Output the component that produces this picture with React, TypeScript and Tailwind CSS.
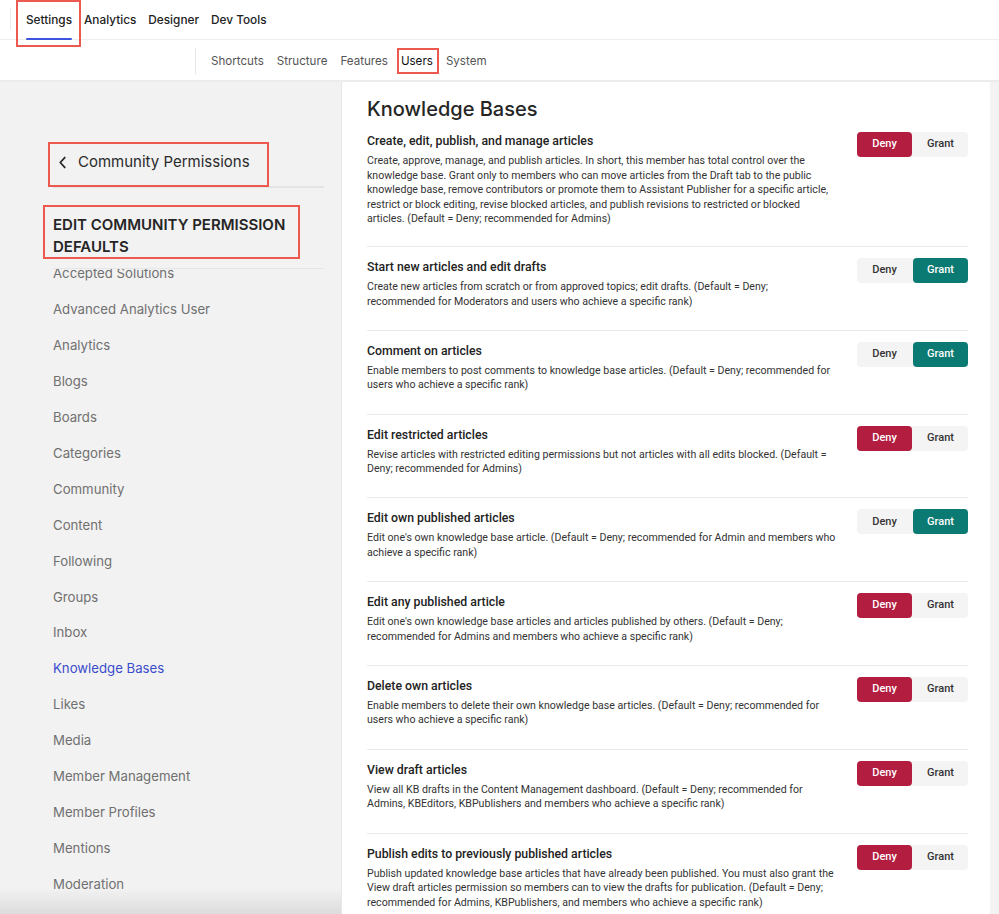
import type { FC, ReactNode } from 'react';

type Perm = { title: string; desc: string; value: 'deny' | 'grant' };

const perms: Perm[] = [
  {
    title: 'Create, edit, publish, and manage articles',
    desc: 'Create, approve, manage, and publish articles. In short, this member has total control over the knowledge base. Grant only to members who can move articles from the Draft tab to the public knowledge base, remove contributors or promote them to Assistant Publisher for a specific article, restrict or block editing, revise blocked articles, and publish revisions to restricted or blocked articles. (Default = Deny; recommended for Admins)',
    value: 'deny',
  },
  {
    title: 'Start new articles and edit drafts',
    desc: 'Create new articles from scratch or from approved topics; edit drafts. (Default = Deny; recommended for Moderators and users who achieve a specific rank)',
    value: 'grant',
  },
  {
    title: 'Comment on articles',
    desc: 'Enable members to post comments to knowledge base articles. (Default = Deny; recommended for users who achieve a specific rank)',
    value: 'grant',
  },
  {
    title: 'Edit restricted articles',
    desc: 'Revise articles with restricted editing permissions but not articles with all edits blocked. (Default = Deny; recommended for Admins)',
    value: 'deny',
  },
  {
    title: 'Edit own published articles',
    desc: "Edit one's own knowledge base article. (Default = Deny; recommended for Admin and members who achieve a specific rank)",
    value: 'grant',
  },
  {
    title: 'Edit any published article',
    desc: "Edit one's own knowledge base articles and articles published by others. (Default = Deny; recommended for Admins and members who achieve a specific rank)",
    value: 'deny',
  },
  {
    title: 'Delete own articles',
    desc: 'Enable members to delete their own knowledge base articles. (Default = Deny; recommended for users who achieve a specific rank)',
    value: 'deny',
  },
  {
    title: 'View draft articles',
    desc: 'View all KB drafts in the Content Management dashboard. (Default = Deny; recommended for Admins, KBEditors, KBPublishers and members who achieve a specific rank)',
    value: 'deny',
  },
  {
    title: 'Publish edits to previously published articles',
    desc: 'Publish updated knowledge base articles that have already been published. You must also grant the View draft articles permission so members can to view the drafts for publication. (Default = Deny; recommended for Admins, KBPublishers, and members who achieve a specific rank)',
    value: 'deny',
  },
];

const sideItems = [
  'Accepted Solutions',
  'Advanced Analytics User',
  'Analytics',
  'Blogs',
  'Boards',
  'Categories',
  'Community',
  'Content',
  'Following',
  'Groups',
  'Inbox',
  'Knowledge Bases',
  'Likes',
  'Media',
  'Member Management',
  'Member Profiles',
  'Mentions',
  'Moderation',
];

const Marked: FC<{ children: ReactNode; box: string }> = ({ children, box }) => (
  <span className="relative inline-block">
    {children}
    <span className={`pointer-events-none absolute border-2 border-[#ec5a4f] ${box}`} />
  </span>
);

const Toggle: FC<{ value: 'deny' | 'grant' }> = ({ value }) => (
  <div className="flex h-[25px] w-[111px] shrink-0 rounded-[4px] bg-[#f4f4f4] text-[11px] font-medium">
    <div
      className={`flex w-[55px] items-center justify-center rounded-[4px] ${
        value === 'deny' ? 'bg-[#b21d40] text-white' : 'text-[#333]'
      }`}
    >
      Deny
    </div>
    <div
      className={`ml-px flex w-[55px] items-center justify-center rounded-[4px] ${
        value === 'grant' ? 'bg-[#0a7a72] text-white' : 'text-[#333]'
      }`}
    >
      Grant
    </div>
  </div>
);

export default function App() {
  return (
    <div className="flex h-[914px] w-[999px] flex-col overflow-hidden bg-white font-['Inter',sans-serif] text-[#222]">
      <nav className="relative flex h-[40px] shrink-0 items-center gap-[12px] border-b border-[#eeeeee] pl-[26px] text-[11.8px] font-medium leading-[16px]">
        <span className="absolute left-[10px] top-[8px] h-[22px] w-px bg-[#eaeaea]" />
        <Marked box="-left-[10px] -right-[9px] -top-[12px] -bottom-[19px]">
          <span className="relative block">
            Settings
            <span className="absolute -bottom-[12px] left-0 right-0 h-[2px] rounded bg-[#3d55e0]" />
          </span>
        </Marked>
        <span>Analytics</span>
        <span>Designer</span>
        <span>Dev Tools</span>
      </nav>

      <div className="flex h-[42px] shrink-0 items-center border-b-2 border-[#ececec] pl-[195px] pt-[2px] text-[11.6px] leading-[16px] text-[#555]">
        <div className="flex h-[26px] items-center gap-[13px] border-l border-[#e6e6e6] pl-[15px]">
          <span>Shortcuts</span>
          <span>Structure</span>
          <span>Features</span>
          <Marked box="-left-[4px] -right-[6px] -top-[5px] -bottom-[5px]">
            <span className="text-[#111]">Users</span>
          </Marked>
          <span>System</span>
        </div>
      </div>

      <div className="flex min-h-0 flex-1">
        <aside className="relative w-[342px] shrink-0 overflow-hidden border-r border-[#e8e8e8] bg-[#f2f2f2] pl-[53px] pr-[17px]">
          <div className="mt-[68px] flex h-[25px] items-center">
            <Marked box="-left-[5px] -right-[19px] -top-[9px] -bottom-[13px]">
              <span className="flex items-center gap-[11px] pl-[5px] text-[15px] text-[#2a2a2a]">
                <svg width="9" height="13" viewBox="0 0 10 14" fill="none" className="-mt-px">
                  <path d="M7.5 1.5 2.5 7l5 5.5" stroke="#2a2a2a" strokeWidth="2" strokeLinecap="round" strokeLinejoin="round" />
                </svg>
                Community Permissions
              </span>
            </Marked>
          </div>
          <div className="mt-[11px] h-[2px] bg-[#e4e4e4]" />
          <div className="mt-[26px]">
            <Marked box="-left-[10px] -right-[15px] -top-[9px] -bottom-[1px]">
              <h2 className="text-[15px] font-semibold uppercase leading-[22px] text-[#252525]">
                Edit Community Permission
                <br />
                Defaults
              </h2>
            </Marked>
          </div>
          <div className="mt-[10px] h-px bg-[#e6e6e6]" />
          <ul className="h-[700px] overflow-hidden text-[13.2px] text-[#707070]">
            <div className="-mt-[13px]">
              {sideItems.map((item) => (
                <li
                  key={item}
                  className={`flex h-[35.95px] items-center ${item === 'Knowledge Bases' ? 'text-[#3a4ccc]' : ''}`}
                >
                  {item}
                </li>
              ))}
            </div>
          </ul>
          <div className="pointer-events-none absolute bottom-0 left-0 right-0 h-[26px] bg-gradient-to-b from-transparent to-[#dcdcdc]" />
        </aside>

        <main className="flex min-w-0 flex-1">
          <div className="flex-1 overflow-hidden pl-[25px] pr-[22px] pt-[13px]">
            <h1 className="text-[20px] font-medium leading-[28px] text-[#252525]">Knowledge Bases</h1>
            <div className="mt-[9px] font-['Roboto',sans-serif]">
              {perms.map((p, i) => (
                <div
                  key={p.title}
                  className={`flex items-start gap-[20.5px] ${
                    i > 0 ? 'border-t border-[#ebebeb] pb-[20.8px] pt-[11px]' : 'pb-[19.5px]'
                  }`}
                >
                  <div className="min-w-0 flex-1">
                    <div className="text-[12.3px] font-medium leading-[18px] text-[#222]">{p.title}</div>
                    <p className="mt-[4px] text-[10.6px] leading-[14.5px] text-[#333]">{p.desc}</p>
                  </div>
                  <Toggle value={p.value} />
                </div>
              ))}
            </div>
          </div>
          <div className="w-[9px] shrink-0 bg-[#f3f3f3]" />
        </main>
      </div>
    </div>
  );
}
